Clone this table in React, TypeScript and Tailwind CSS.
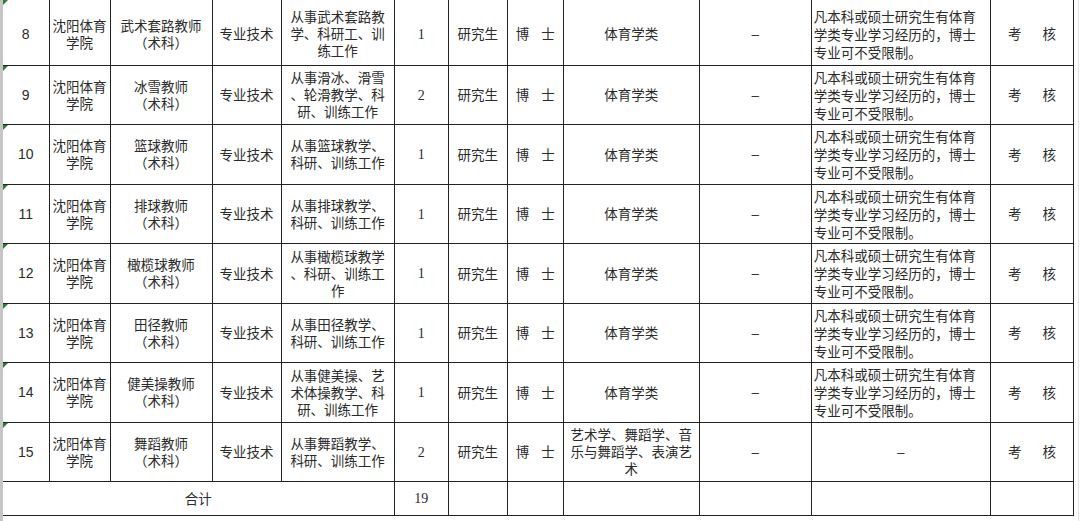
import React from 'react';

type Row = {
  no: string;
  post: string;
  duty: string[];
  count: string;
  major: string[];
  note: boolean;
};

const rows: Row[] = [
  { no: '8', post: '武术套路教师', duty: ['从事武术套路教', '学、科研工、训', '练工作'], count: '1', major: ['体育学类'], note: true },
  { no: '9', post: '冰雪教师', duty: ['从事滑冰、滑雪', '、轮滑教学、科', '研、训练工作'], count: '2', major: ['体育学类'], note: true },
  { no: '10', post: '篮球教师', duty: ['从事篮球教学、', '科研、训练工作'], count: '1', major: ['体育学类'], note: true },
  { no: '11', post: '排球教师', duty: ['从事排球教学、', '科研、训练工作'], count: '1', major: ['体育学类'], note: true },
  { no: '12', post: '橄榄球教师', duty: ['从事橄榄球教学', '、科研、训练工', '作'], count: '1', major: ['体育学类'], note: true },
  { no: '13', post: '田径教师', duty: ['从事田径教学、', '科研、训练工作'], count: '1', major: ['体育学类'], note: true },
  { no: '14', post: '健美操教师', duty: ['从事健美操、艺', '术体操教学、科', '研、训练工作'], count: '1', major: ['体育学类'], note: true },
  { no: '15', post: '舞蹈教师', duty: ['从事舞蹈教学、', '科研、训练工作'], count: '2', major: ['艺术学、舞蹈学、音', '乐与舞蹈学、表演艺', '术'], note: false },
];

const heights = ['h-[65px]', 'h-[59.5px]', 'h-[59.5px]', 'h-[59.5px]', 'h-[59.5px]', 'h-[59.5px]', 'h-[59.5px]', 'h-[59.5px]'];

const cell = 'border border-[#222] p-0 align-middle text-center';

function Lines({ lines }: { lines: string[] }) {
  return (
    <>
      {lines.map((l, i) => (
        <div key={i}>{l}</div>
      ))}
    </>
  );
}

export default function App() {
  return (
    <div
      className="w-[1080px] h-[521px] overflow-hidden bg-white text-[#2b2b2b] text-[13.5px] leading-[17px]"
      style={{ fontFamily: '"Noto Sans CJK SC", "Noto Sans", sans-serif' }}
    >
      <div className="flex h-full items-start">
        <div className="w-[3px] h-full bg-[#c6c6c6] shrink-0" />
        <table className="table-fixed border-collapse w-[1071px] shrink-0">
          <colgroup>
            <col className="w-[46px]" />
            <col className="w-[61px]" />
            <col className="w-[102px]" />
            <col className="w-[69px]" />
            <col className="w-[113px]" />
            <col className="w-[54px]" />
            <col className="w-[59px]" />
            <col className="w-[56px]" />
            <col className="w-[136px]" />
            <col className="w-[112px]" />
            <col className="w-[179px]" />
            <col className="w-[83px]" />
          </colgroup>
          <tbody>
            {rows.map((r, i) => {
              const top = i === 0 ? 'border-t-0 pt-[3px]' : '';
              return (
                <tr key={r.no} className={heights[i]}>
                  <td className={`${cell} ${top} border-l-0 relative`}>
                    <span className="absolute left-0 top-0 w-0 h-0 border-t-[5px] border-r-[5px] border-t-[#2f7d32] border-r-transparent" />
                    <span style={{ fontFamily: '"Liberation Sans", Arial, sans-serif' }} className="text-[14px]">
                      {r.no}
                    </span>
                  </td>
                  <td className={`${cell} ${top}`}>
                    <Lines lines={['沈阳体育', '学院']} />
                  </td>
                  <td className={`${cell} ${top}`}>
                    <Lines lines={[r.post, '（术科）']} />
                  </td>
                  <td className={`${cell} ${top}`}>专业技术</td>
                  <td className={`${cell} ${top}`}>
                    <Lines lines={r.duty} />
                  </td>
                  <td className={`${cell} ${top}`}>
                    <span style={{ fontFamily: '"Liberation Serif", serif' }} className="text-[14px]">
                      {r.count}
                    </span>
                  </td>
                  <td className={`${cell} ${top}`}>研究生</td>
                  <td className={`${cell} ${top}`}>
                    <div className="flex justify-between px-[8px]">
                      <span>博</span>
                      <span>士</span>
                    </div>
                  </td>
                  <td className={`${cell} ${top}`}>
                    <Lines lines={r.major} />
                  </td>
                  <td className={`${cell} ${top}`}>
                    <span style={{ fontFamily: '"Liberation Sans", Arial, sans-serif' }}>–</span>
                  </td>
                  <td className={`${cell} ${top} ${r.note ? 'text-left pl-[2px]' : ''} leading-[18px]`}>
                    {r.note ? (
                      <Lines lines={['凡本科或硕士研究生有体育', '学类专业学习经历的，博士', '专业可不受限制。']} />
                    ) : (
                      <span style={{ fontFamily: '"Liberation Sans", Arial, sans-serif' }}>–</span>
                    )}
                  </td>
                  <td className={`${cell} ${top}`}>
                    <div className="flex justify-between px-[17px]">
                      <span>考</span>
                      <span>核</span>
                    </div>
                  </td>
                </tr>
              );
            })}
            <tr className="h-[33.5px]">
              <td colSpan={5} className={`${cell} border-l-0`}>
                合计
              </td>
              <td className={cell}>
                <span style={{ fontFamily: '"Liberation Serif", serif' }} className="text-[14px]">
                  19
                </span>
              </td>
              <td className={cell} />
              <td className={cell} />
              <td className={cell} />
              <td className={cell} />
              <td className={cell} />
              <td className={cell} />
            </tr>
          </tbody>
        </table>
        <div className="flex-1 h-full border-l border-[#e2e2e2] ml-[4px]" />
      </div>
    </div>
  );
}
